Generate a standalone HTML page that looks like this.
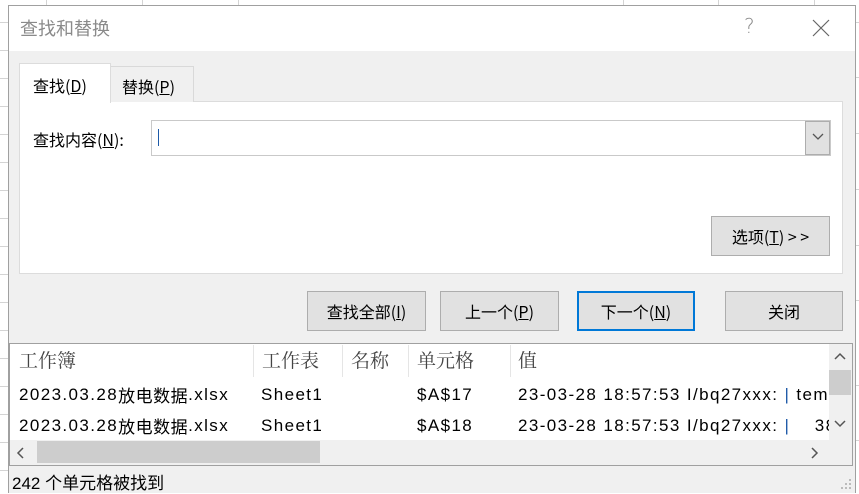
<!DOCTYPE html>
<html><head><meta charset="utf-8"><style>
*{margin:0;padding:0;box-sizing:border-box}
body{width:859px;height:493px;position:relative;overflow:hidden;background:#fff;font-family:"Liberation Sans","Microsoft YaHei","Noto Sans CJK SC",sans-serif;font-size:16px;color:#000}
.a{position:absolute}
.vl{position:absolute;width:1px;background:#d4d4d4}
.hl{position:absolute;height:1px;background:#d4d4d4}
.dlg{left:8px;top:5px;width:848px;height:488px;background:#f0f0f0;border:1px solid #a0a0a0;border-bottom:none}
.btn{position:absolute;height:40px;background:#e1e1e1;border:1px solid #adadad;font-size:16px;text-align:center;line-height:38px;font-family:"Noto Sans CJK SC",sans-serif}
u{text-decoration:underline}
.t{font-family:"Noto Sans CJK SC",sans-serif}
.hdr{position:absolute;top:6px;font-family:"Noto Serif CJK SC",serif;font-size:19px;color:#444}
.cell{position:absolute;font-size:17px;line-height:22px;height:22px;letter-spacing:1.4px;white-space:nowrap;font-family:"Liberation Sans","Noto Sans CJK SC",sans-serif}
.cell span.c{font-family:"Noto Sans CJK SC",sans-serif;font-size:17px;letter-spacing:0.5px;line-height:22px;vertical-align:top}
</style></head><body>
<div class="vl" style="left:46px;top:0;height:6px"></div>
<div class="vl" style="left:142px;top:0;height:6px"></div>
<div class="vl" style="left:238px;top:0;height:6px"></div>
<div class="vl" style="left:623px;top:0;height:6px"></div>
<div class="vl" style="left:718px;top:0;height:6px"></div>
<div class="vl" style="left:814px;top:0;height:6px"></div>
<div class="hl" style="left:0;top:22px;width:8px"></div>
<div class="hl" style="left:0;top:50px;width:8px"></div>
<div class="hl" style="left:0;top:78px;width:8px"></div>
<div class="hl" style="left:0;top:106px;width:8px"></div>
<div class="hl" style="left:0;top:134px;width:8px"></div>
<div class="hl" style="left:0;top:162px;width:8px"></div>
<div class="hl" style="left:0;top:190px;width:8px"></div>
<div class="hl" style="left:0;top:218px;width:8px"></div>
<div class="hl" style="left:0;top:246px;width:8px"></div>
<div class="hl" style="left:0;top:274px;width:8px"></div>
<div class="hl" style="left:0;top:302px;width:8px"></div>
<div class="hl" style="left:0;top:330px;width:8px"></div>
<div class="hl" style="left:0;top:358px;width:8px"></div>
<div class="hl" style="left:0;top:386px;width:8px"></div>
<div class="hl" style="left:0;top:414px;width:8px"></div>
<div class="hl" style="left:0;top:442px;width:8px"></div>
<div class="hl" style="left:0;top:470px;width:8px"></div>
<div class="hl" style="left:856px;top:22px;width:4px"></div>
<div class="hl" style="left:856px;top:77px;width:4px"></div>
<div class="hl" style="left:856px;top:133px;width:4px"></div>
<div class="hl" style="left:856px;top:189px;width:4px"></div>
<div class="hl" style="left:856px;top:245px;width:4px"></div>
<div class="hl" style="left:856px;top:300px;width:4px"></div>
<div class="hl" style="left:856px;top:385px;width:4px"></div>
<div class="hl" style="left:856px;top:440px;width:4px"></div>

<div class="a dlg"></div>
<div class="a" style="left:9px;top:6px;width:846px;height:45px;background:#fff"></div>
<div class="a t" style="left:20px;top:15px;font-size:18px;color:#8a8a8a">查找和替换</div>
<div class="a" style="left:744px;top:14px;font-size:20px;color:#8a8a8a;font-family:'DejaVu Sans',sans-serif;font-weight:200">?</div>
<svg class="a" style="left:811px;top:19px" width="20" height="18"><path d="M2 1L18 17M18 1L2 17" stroke="#666" stroke-width="1.2" fill="none"/></svg>

<div class="a" style="left:19px;top:101px;width:824px;height:173px;background:#fff;border:1px solid #dcdcdc"></div>
<div class="a" style="left:110px;top:66px;width:84px;height:36px;background:#f0f0f0;border:1px solid #d9d9d9;border-bottom:none"></div>
<div class="a t" style="left:122px;top:74px">替换(<u>P</u>)</div>
<div class="a" style="left:19px;top:63px;width:92px;height:40px;background:#fff;border:1px solid #dcdcdc;border-bottom:none"></div>
<div class="a t" style="left:33px;top:73px">查找(<u>D</u>)</div>

<div class="a t" style="left:33px;top:127px">查找内容(<u>N</u>):</div>
<div class="a" style="left:151px;top:120px;width:680px;height:36px;background:#fff;border:1px solid #c9c9c9"></div>
<div class="a" style="left:158px;top:129px;width:1px;height:17px;background:#1e5aa8"></div>
<div class="a" style="left:805px;top:121px;width:25px;height:34px;background:#e1e1e1;border:1px solid #adadad"></div>
<svg class="a" style="left:811px;top:132px" width="14" height="10"><path d="M2 2L7 7L12 2" stroke="#555" stroke-width="1.3" fill="none"/></svg>

<div class="btn" style="left:711px;top:216px;width:119px"><span>选项(<u>T</u>) &gt; &gt;</span></div>
<div class="btn" style="left:307px;top:291px;width:119px">查找全部(<u>I</u>)</div>
<div class="btn" style="left:440px;top:291px;width:119px">上一个(<u>P</u>)</div>
<div class="btn" style="left:577px;top:291px;width:118px;border:2px solid #0078d7;line-height:36px">下一个(<u>N</u>)</div>
<div class="btn" style="left:725px;top:291px;width:118px">关闭</div>

<div class="a" style="left:9px;top:343px;width:844px;height:123px;background:#fff;border:1px solid #a0a0a0"></div>
<div class="vl" style="left:253px;top:345px;height:32px;background:#e5e5e5"></div>
<div class="vl" style="left:342px;top:345px;height:32px;background:#e5e5e5"></div>
<div class="vl" style="left:408px;top:345px;height:32px;background:#e5e5e5"></div>
<div class="vl" style="left:510px;top:345px;height:32px;background:#e5e5e5"></div>
<div class="hdr" style="left:19px;top:346px">工作簿</div>
<div class="hdr" style="left:262px;top:346px">工作表</div>
<div class="hdr" style="left:351px;top:346px">名称</div>
<div class="hdr" style="left:417px;top:346px">单元格</div>
<div class="hdr" style="left:518px;top:346px">值</div>
<div class="a" style="left:10px;top:378px;width:819px;height:62px;overflow:hidden">
<div class="cell" style="left:9px;top:6px">2023.03.28<span class="c">放电数据</span>.xlsx</div>
<div class="cell" style="left:251px;top:6px">Sheet1</div>
<div class="cell" style="left:407px;top:6px">$A$17</div>
<div class="cell" style="left:508px;top:6px">23-03-28 18:57:53 I/bq27xxx: <span style="color:#1e5aa8">|</span> tem</div>
<div class="cell" style="left:9px;top:37px">2023.03.28<span class="c">放电数据</span>.xlsx</div>
<div class="cell" style="left:251px;top:37px">Sheet1</div>
<div class="cell" style="left:407px;top:37px">$A$18</div>
<div class="cell" style="left:508px;top:37px">23-03-28 18:57:53 I/bq27xxx: <span style="color:#1e5aa8">|</span> &nbsp;&nbsp;&nbsp;38</div>
</div>
<div class="a" style="left:829px;top:344px;width:23px;height:96px;background:#f0f0f0"></div>
<div class="a" style="left:829px;top:370px;width:22px;height:25px;background:#cdcdcd"></div>
<svg class="a" style="left:833px;top:352px" width="14" height="10"><path d="M2 7L7 2L12 7" stroke="#555" stroke-width="1.5" fill="none"/></svg>
<svg class="a" style="left:833px;top:419px" width="14" height="10"><path d="M2 2L7 7L12 2" stroke="#555" stroke-width="1.5" fill="none"/></svg>
<div class="a" style="left:10px;top:440px;width:842px;height:25px;background:#f0f0f0"></div>
<div class="a" style="left:37px;top:441px;width:283px;height:22px;background:#cdcdcd"></div>
<svg class="a" style="left:16px;top:446px" width="10" height="14"><path d="M7 2L2 7L7 12" stroke="#555" stroke-width="1.5" fill="none"/></svg>
<svg class="a" style="left:810px;top:446px" width="10" height="14"><path d="M2 2L7 7L2 12" stroke="#555" stroke-width="1.5" fill="none"/></svg>

<div class="a" style="left:12px;top:469px;font-size:17px;font-family:'Liberation Sans','Noto Sans CJK SC',sans-serif">242 个单元格被找到</div>
<svg class="a" style="left:838px;top:476px" width="16" height="16" fill="#bbb"><rect x="11" y="3" width="2" height="2"/><rect x="7" y="7" width="2" height="2"/><rect x="11" y="7" width="2" height="2"/><rect x="3" y="11" width="2" height="2"/><rect x="7" y="11" width="2" height="2"/><rect x="11" y="11" width="2" height="2"/></svg>
</body></html>
